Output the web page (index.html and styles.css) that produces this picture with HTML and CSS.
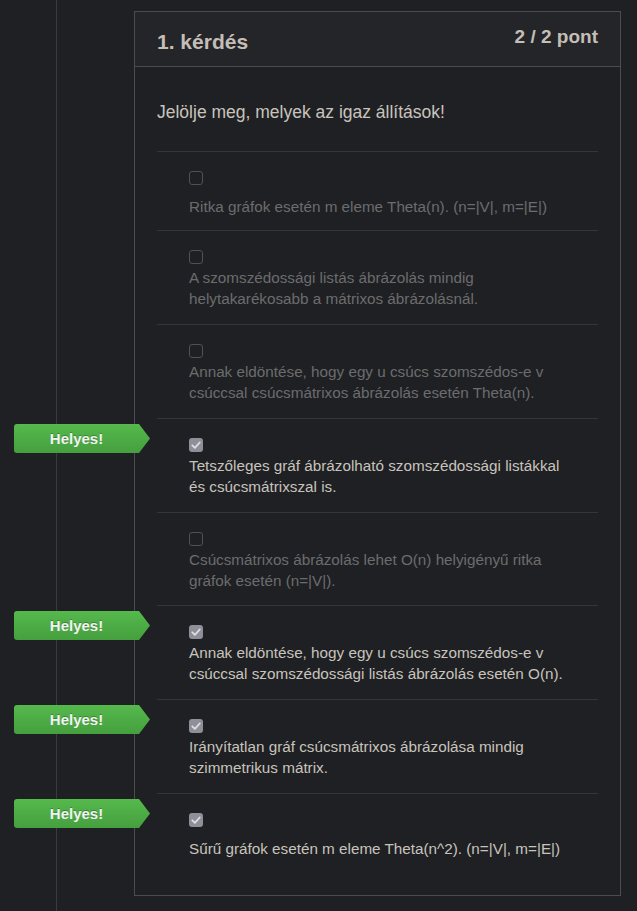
FILE: index.html
```html
<!DOCTYPE html>
<html lang="hu">
<head>
<meta charset="utf-8">
<title>1. kérdés</title>
<link rel="stylesheet" href="styles.css">
</head>
<body>
<div class="page">
  <div class="rail"></div>
  <div class="card">
    <div class="card-header">
      <h2 class="title">1. kérdés</h2>
      <div class="points">2 / 2 pont</div>
    </div>
    <div class="card-body">
      <p class="question">Jelölje meg, melyek az igaz állítások!</p>
      <div class="options">
        <div class="option single">
          <span class="box"></span>
          <div class="label">Ritka gráfok esetén m eleme Theta(n). (n=|V|, m=|E|)</div>
        </div>
        <div class="option">
          <span class="box"></span>
          <div class="label">A szomszédossági listás ábrázolás mindig helytakarékosabb a mátrixos ábrázolásnál.</div>
        </div>
        <div class="option">
          <span class="box"></span>
          <div class="label">Annak eldöntése, hogy egy u csúcs szomszédos-e v csúccsal csúcsmátrixos ábrázolás esetén Theta(n).</div>
        </div>
        <div class="option checked">
          <div class="badge">Helyes!</div>
          <span class="box"><svg viewBox="0 0 14 14" width="14" height="14"><path d="M3.3 7.3 L5.9 9.8 L10.8 4.4" fill="none" stroke="#dcdce0" stroke-width="1.8" stroke-linecap="round" stroke-linejoin="round"/></svg></span>
          <div class="label">Tetszőleges gráf ábrázolható szomszédossági listákkal és csúcsmátrixszal is.</div>
        </div>
        <div class="option tight">
          <span class="box"></span>
          <div class="label">Csúcsmátrixos ábrázolás lehet O(n) helyigényű ritka gráfok esetén (n=|V|).</div>
        </div>
        <div class="option checked">
          <div class="badge">Helyes!</div>
          <span class="box"><svg viewBox="0 0 14 14" width="14" height="14"><path d="M3.3 7.3 L5.9 9.8 L10.8 4.4" fill="none" stroke="#dcdce0" stroke-width="1.8" stroke-linecap="round" stroke-linejoin="round"/></svg></span>
          <div class="label">Annak eldöntése, hogy egy u csúcs szomszédos-e v csúccsal szomszédossági listás ábrázolás esetén O(n).</div>
        </div>
        <div class="option checked">
          <div class="badge">Helyes!</div>
          <span class="box"><svg viewBox="0 0 14 14" width="14" height="14"><path d="M3.3 7.3 L5.9 9.8 L10.8 4.4" fill="none" stroke="#dcdce0" stroke-width="1.8" stroke-linecap="round" stroke-linejoin="round"/></svg></span>
          <div class="label">Irányítatlan gráf csúcsmátrixos ábrázolása mindig szimmetrikus mátrix.</div>
        </div>
        <div class="option checked single">
          <div class="badge">Helyes!</div>
          <span class="box"><svg viewBox="0 0 14 14" width="14" height="14"><path d="M3.3 7.3 L5.9 9.8 L10.8 4.4" fill="none" stroke="#dcdce0" stroke-width="1.8" stroke-linecap="round" stroke-linejoin="round"/></svg></span>
          <div class="label">Sűrű gráfok esetén m eleme Theta(n^2). (n=|V|, m=|E|)</div>
        </div>
      </div>
    </div>
  </div>
</div>
</body>
</html>
```
FILE: styles.css
```css
* { box-sizing: border-box; }
html, body {
  margin: 0;
  padding: 0;
  background: #1f2023;
}
body {
  font-family: "Liberation Sans", Arial, sans-serif;
  color: #c8c4bd;
}
.page {
  display: flex;
  min-height: 911px;
  align-items: flex-start;
}
.rail {
  width: 57px;
  align-self: stretch;
  border-right: 1px solid #3a3b3e;
}
.card {
  margin: 11px 0 0 77px;
  width: 487px;
  border: 1px solid #4a4c50;
  background: #1f2023;
}
.card-header {
  height: 55px;
  padding: 14px 22px 0;
  display: flex;
  justify-content: space-between;
  align-items: flex-start;
  background: #242528;
  border-bottom: 1px solid #4a4c50;
}
.title {
  margin: 4px 0 0;
  font-size: 21px;
  line-height: 24px;
  font-weight: bold;
  color: #c3beb6;
}
.points {
  font-size: 19px;
  line-height: 22px;
  font-weight: bold;
  color: #c3beb6;
}
.card-body {
  padding: 33px 22px 23px;
}
.question {
  margin: 0 0 27px;
  font-size: 17.5px;
  line-height: 24px;
  color: #c8c4bd;
}
.option {
  position: relative;
  border-top: 1px solid #333538;
  padding: 19px 0 15px 32px;
}
.option.tight {
  padding-bottom: 14px;
}
.option.single {
  padding-bottom: 13px;
}
.box {
  display: block;
  width: 14px;
  height: 14px;
  border: 1.5px solid #505156;
  border-radius: 3px;
  background: #1f2023;
}
.checked .box {
  border: none;
  background: #8f8f99;
}
.box svg {
  display: block;
}
.label {
  margin-top: 3px;
  padding-right: 22px;
  font-size: 15.25px;
  line-height: 21px;
  color: #6c6c6e;
}
.single .label {
  margin-top: 11px;
}
.checked .label {
  color: #c8c4bd;
}
.badge {
  position: absolute;
  top: 5px;
  left: -143px;
  width: 136px;
  height: 29px;
  padding-right: 11px;
  border-radius: 3px 0 0 3px;
  background: linear-gradient(#55b94c, #459f3e);
  clip-path: polygon(0 0, calc(100% - 11px) 0, 100% 50%, calc(100% - 11px) 100%, 0 100%);
  color: #f2f2f2;
  font-size: 15px;
  font-weight: bold;
  line-height: 29px;
  text-align: center;
  text-shadow: 0 -1px 0 rgba(0, 0, 0, 0.25);
}
```
